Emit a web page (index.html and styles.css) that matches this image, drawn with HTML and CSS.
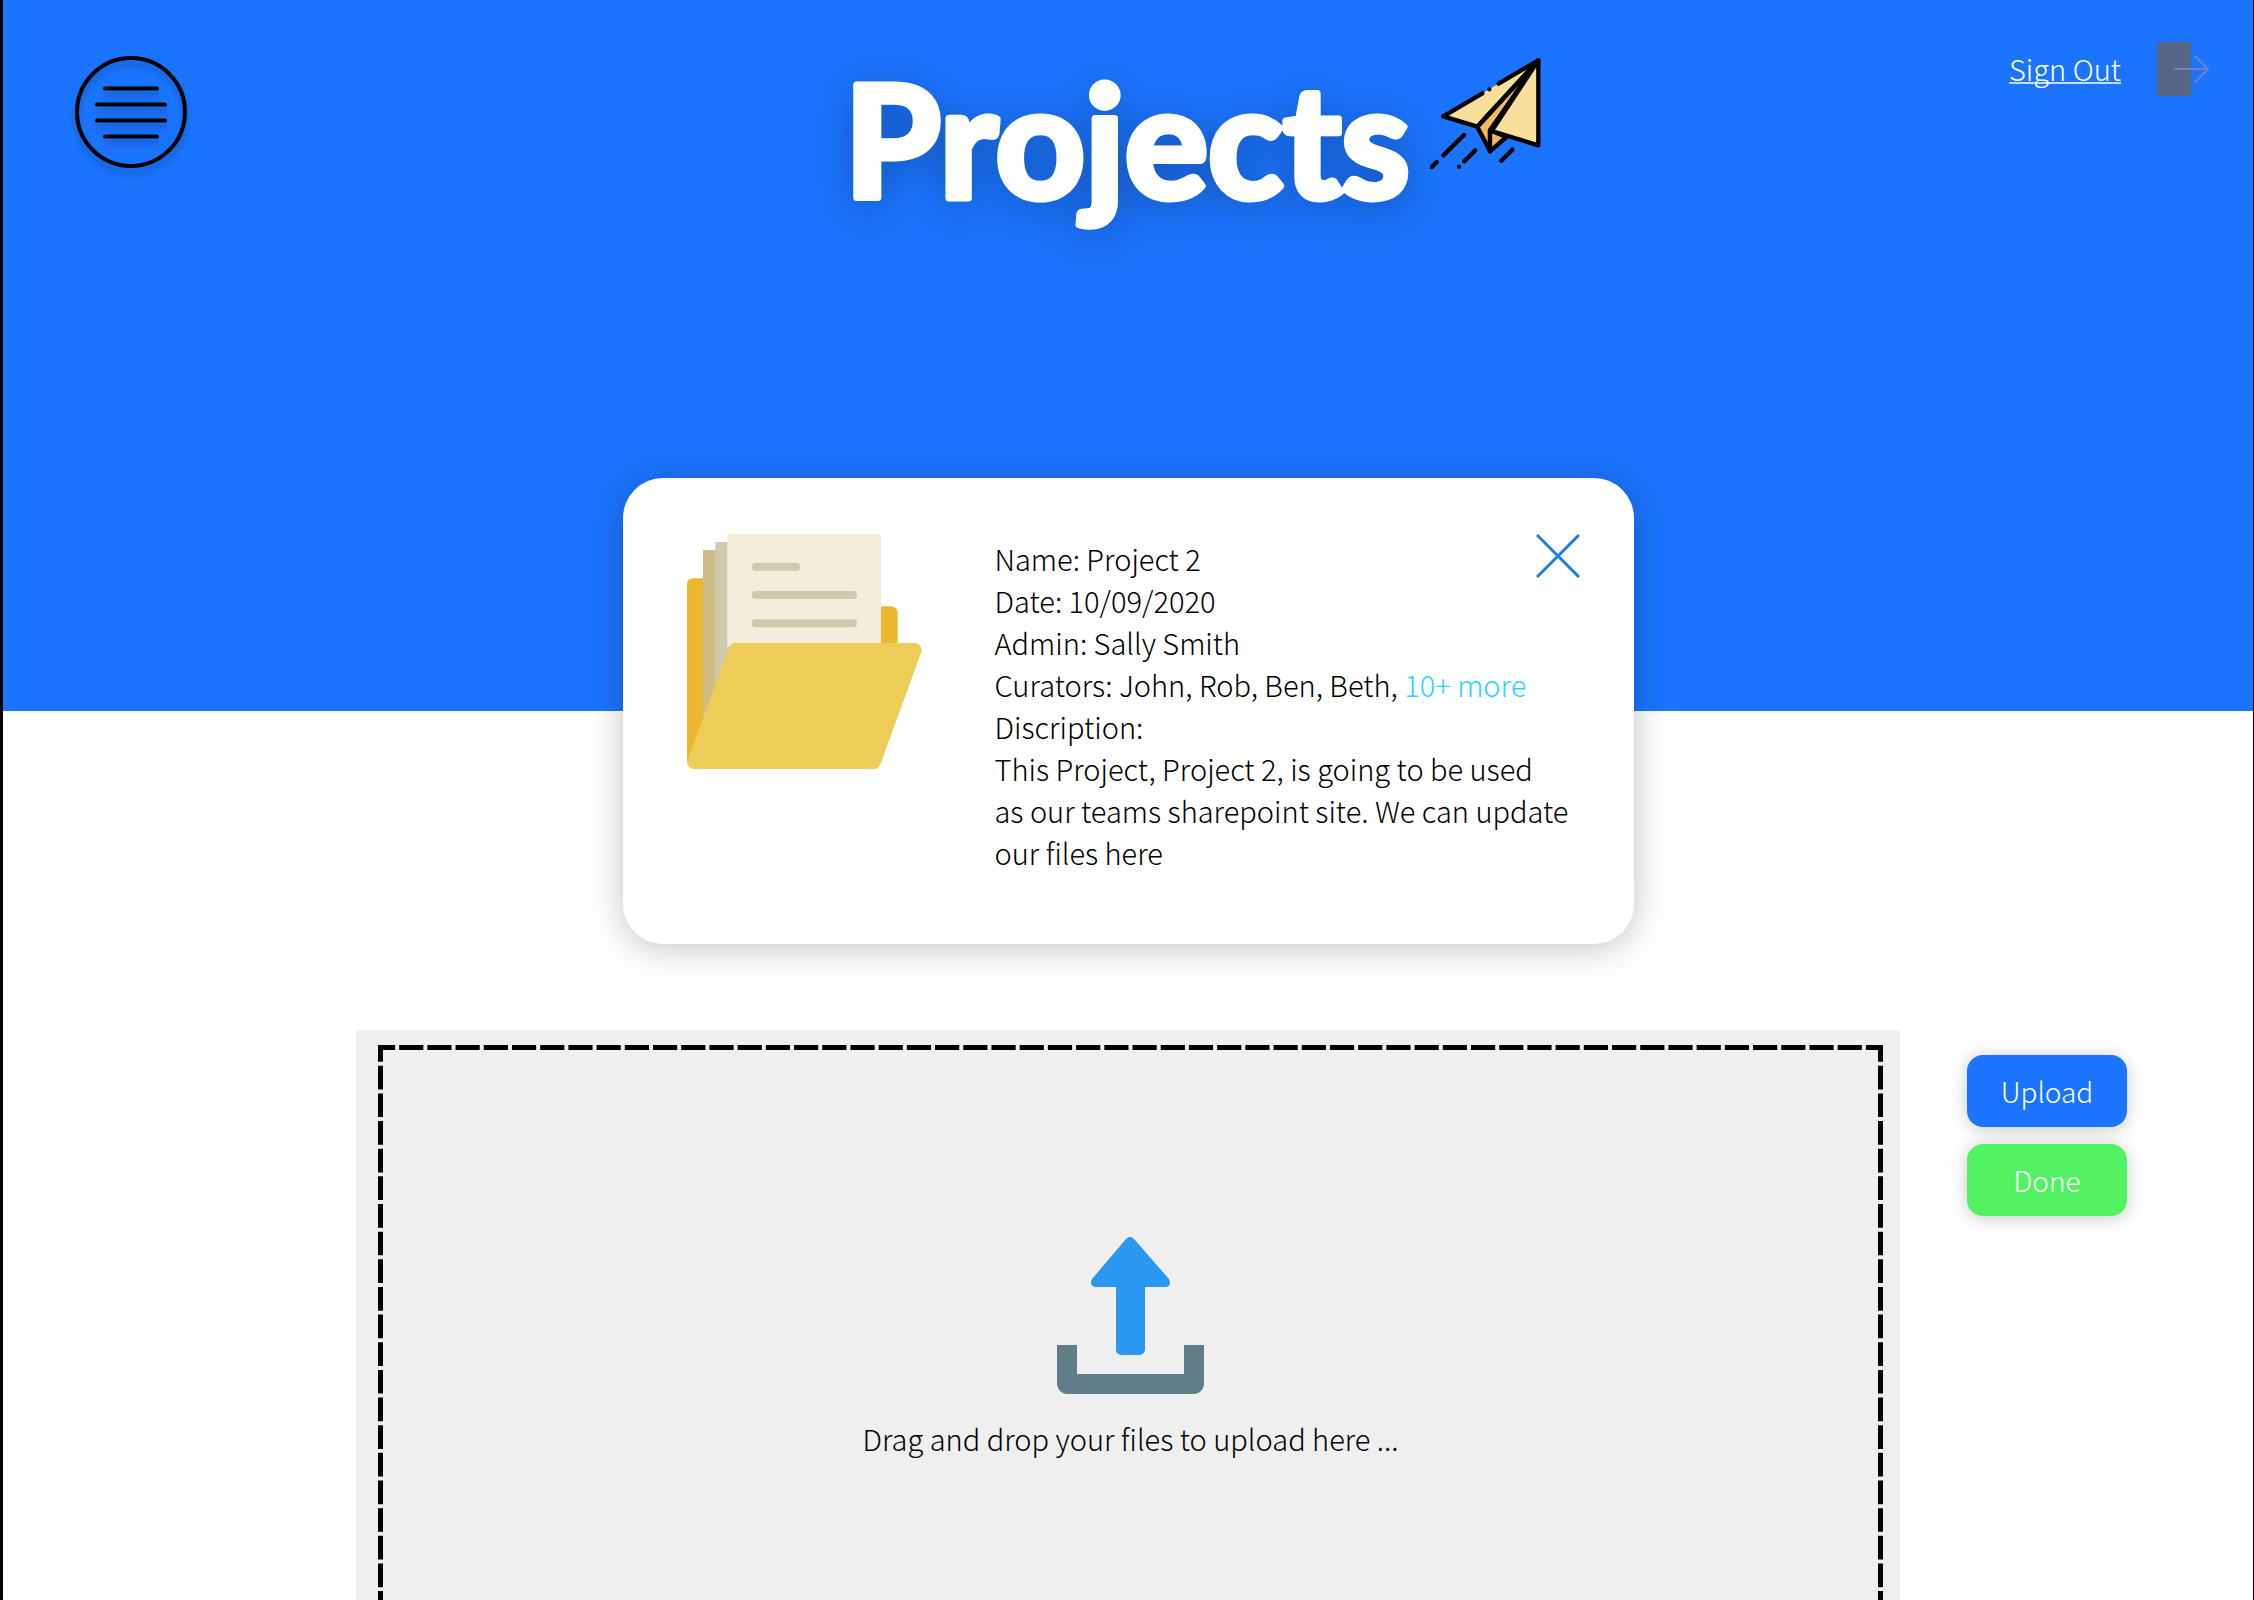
FILE: index.html
```html
<!DOCTYPE html>
<html lang="en">
<head>
<meta charset="utf-8">
<meta name="viewport" content="width=device-width, initial-scale=1">
<title>Projects</title>
<link rel="stylesheet" href="styles.css">
</head>
<body>
<div class="page">
  <header class="hero">
    <button class="menu" type="button" aria-label="Menu">
      <svg class="menu-icon" viewBox="0 0 112 112" fill="none" stroke="#000" stroke-width="4" stroke-linecap="round">
        <circle cx="56" cy="56" r="54"/>
        <path d="M30 32.500h52M22 48.500h68M22 64.500h68M30 80.500h52"/>
      </svg>
    </button>
    <h1 class="title">
      <svg class="title-art" viewBox="0 0 566 220"><text x="282" y="156" text-anchor="middle">Projects</text></svg>
    </h1>
    <div class="hero-end">
      <svg class="plane" viewBox="60 50 336 336" stroke="#000" stroke-width="13" stroke-linecap="round" stroke-linejoin="round">
        <path d="M100 228L385 60L202 259Z" fill="#f8df9a" stroke="none"/>
        <path d="M202 259L385 60L240 270V333Z" fill="#f4b860"/>
        <path d="M240 270V333L289 290Z" fill="#f4b860"/>
        <path d="M385 60V315L245 272Z" fill="#f8df9a"/>
        <path d="M217 159L100 228L202 259L385 60L266 130M238 147v0" fill="none"/>
        <path d="M162 284L100 345M80 365L65 380M196 330L163 363M147 379v0M307 328L274 361" fill="none"/>
      </svg>
      <a class="signout" href="#">
        <span class="signout-label">Sign Out</span>
        <svg class="door" viewBox="0 0 52 54" fill="none">
          <path d="M0 0h34v54H0z" fill="#586484"/>
          <path d="M17 27h34M38 14l13 13l-13 13" stroke="#7080c4" stroke-width="2"/>
        </svg>
      </a>
    </div>
  </header>

  <main>
    <section class="card">
      <svg class="folder" viewBox="227 222 705 705">
        <path d="M227 905V374Q227 355 246 355H300V860L240 915Z" fill="#eab72f"/>
        <path d="M790 439H839Q859 441 859 460V560H790Z" fill="#eab72f"/>
        <path d="M275 270H330V720L275 775Z" fill="#d0bc85"/>
        <path d="M312 246H360V640L312 675Z" fill="#cfc9b0"/>
        <path d="M348 222H809V560H348Z" fill="#f4eddb"/>
        <path d="M433 320H555M433 405H725M433 490H725" stroke="#cfc9b0" stroke-width="24" stroke-linecap="round"/>
        <path d="M371 549H912Q931 552 931 573L809 908Q803 927 789 927H246Q229 925 227 905L352 566Q358 549 371 549Z" fill="#edcd57"/>
      </svg>
      <div class="details">
        <p>Name: Project 2</p>
        <p>Date: 10/09/2020</p>
        <p>Admin: Sally Smith</p>
        <p>Curators: John, Rob, Ben, Beth, <a class="more" href="#">10+ more</a></p>
        <p>Discription:</p>
        <p>This Project, Project 2, is going to be used<br>as our teams sharepoint site. We can update<br>our files here</p>
      </div>
      <button class="close" type="button" aria-label="Close">
        <svg class="close-icon" viewBox="0 0 44 44" stroke="#1a81e0" stroke-width="3"><path d="M1 1l42 42M43 1L1 43"/></svg>
      </button>
    </section>

    <section class="upload">
      <div class="dropzone">
        <svg class="edge-x" viewBox="0 0 1505 5" preserveAspectRatio="none"><path d="M0 2.500H1505" pathLength="1494"/></svg>
        <div class="drop-body">
          <svg class="edge-y" viewBox="0 0 5 555" preserveAspectRatio="none"><path d="M2.500 0V555" pathLength="562"/></svg>
          <div class="drop-content">
            <svg class="upload-icon" viewBox="0 0 147 157">
              <path d="M0 108H20V137H127V108H147V148Q145 156 138 157H9Q2 156 0 148Z" fill="#607d88"/>
              <path d="M69 2Q73 -2 77 2L112 42Q115 49 109 50H88V113Q87 118 82 118H64Q59 117 59 113V50H38Q32 48 35 42Z" fill="#2b98f0"/>
            </svg>
            <p class="hint">Drag and drop your files to upload here ...</p>
          </div>
          <svg class="edge-y" viewBox="0 0 5 555" preserveAspectRatio="none"><path d="M2.500 0V555" pathLength="562"/></svg>
        </div>
      </div>
      <div class="actions">
        <button class="btn btn-upload" type="button">Upload</button>
        <button class="btn btn-done" type="button">Done</button>
      </div>
    </section>
  </main>
</div>
</body>
</html>
```
FILE: styles.css
```css
* {
  box-sizing: border-box;
}

body {
  margin: 0;
  font-family: "Noto Sans CJK JP", "Noto Sans", sans-serif;
  font-weight: 300;
  font-size: 29px;
  line-height: 42px;
  color: #000;
  background: #fff;
}

p {
  margin: 0;
}

svg {
  display: block;
}

button {
  padding: 0;
  border: 0;
  background: none;
  font: inherit;
  cursor: pointer;
}

.page {
  display: flex;
  flex-direction: column;
  min-height: 100vh;
  border-left: 3px solid #000;
  border-right: 1px solid #000;
}

.hero {
  display: grid;
  grid-template-columns: 1fr auto 1fr;
  align-items: start;
  height: 711px;
  padding: 42px 44px 0;
  background: #1b74fd;
}

.menu {
  justify-self: start;
  margin: 14px 0 0 28px;
}

.menu-icon {
  width: 112px;
  height: 112px;
  filter: drop-shadow(0 6px 3px rgba(0, 0, 0, 0.2));
}

.title {
  margin: 0;
}

.title-art {
  width: 566px;
  height: 220px;
  overflow: visible;
  font-family: Lato, sans-serif;
  font-weight: 700;
  font-size: 156px;
  fill: #fff;
  stroke: #fff;
  stroke-width: 7px;
  stroke-linejoin: round;
  filter: drop-shadow(0 8px 20px rgba(0, 0, 0, 0.26));
}

.hero-end {
  display: flex;
  justify-content: space-between;
  align-items: flex-start;
  padding-left: 19px;
}

.plane {
  width: 112px;
  height: 112px;
  margin-top: 15px;
}

.signout {
  display: flex;
  align-items: center;
  gap: 36px;
  color: #fff;
  text-decoration: none;
}

.signout-label {
  border-bottom: 2px solid #c4dbff;
  line-height: 28px;
}

.door {
  width: 52px;
  height: 54px;
}

main {
  display: flex;
  flex: 1;
  flex-direction: column;
}

.card {
  position: relative;
  display: flex;
  align-items: flex-start;
  align-self: center;
  width: 1011px;
  min-height: 466px;
  margin-top: -233px;
  padding: 56px 54px 56px 64px;
  border-radius: 40px;
  background: #fff;
  box-shadow: 0 4px 36px rgba(0, 0, 0, 0.24);
}

.folder {
  flex: none;
  width: 235px;
  height: 235px;
}

.details {
  flex: 1;
  margin: 3px 0 0 73px;
}

.more {
  color: #2bd2ff;
  text-decoration: none;
}

.close {
  position: absolute;
  top: 56px;
  right: 54px;
}

.close-icon {
  width: 44px;
  height: 44px;
}

.upload {
  display: flex;
  flex: 1;
  align-items: stretch;
  gap: 67px;
  margin-top: 86px;
  padding: 0 126px 0 353px;
}

.dropzone {
  display: flex;
  flex: 1;
  flex-direction: column;
  padding: 15px 17px 0 22px;
  background: #efefef;
}

.edge-x,
.edge-y {
  flex: none;
  fill: none;
  stroke: #000;
  stroke-width: 5px;
  stroke-dasharray: 24 4;
  stroke-dashoffset: 7px;
}

.edge-x {
  width: 100%;
  height: 5px;
}

.edge-y {
  width: 5px;
  height: 555px;
}

.drop-body {
  display: flex;
  justify-content: space-between;
  margin-top: -5px;
}

.drop-content {
  display: flex;
  flex-direction: column;
  align-items: center;
  gap: 23px;
  padding-top: 192px;
}

.upload-icon {
  width: 147px;
  height: 157px;
}

.actions {
  display: flex;
  flex-direction: column;
  gap: 17px;
  width: 160px;
  padding-top: 25px;
}

.btn {
  height: 72px;
  border-radius: 16px;
  color: #fff;
  font-size: 28px;
  box-shadow: 0 2px 18px rgba(0, 0, 0, 0.22);
}

.btn-upload {
  background: #1b74fd;
}

.btn-done {
  background: #53f263;
}
```
